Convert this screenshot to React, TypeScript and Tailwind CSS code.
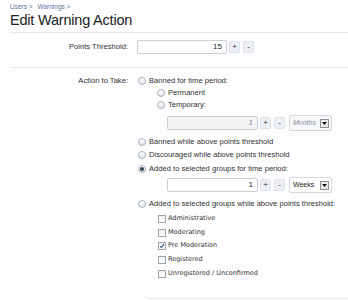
import React from "react";

function Radio({ checked }: { checked?: boolean }) {
    return (
        <span className="w-[8px] h-[8px] rounded-full border border-[#a9b1bd] bg-gradient-to-b from-[#ffffff] to-[#dfe3e9] flex items-center justify-center shrink-0">
            {checked && <span className="w-[4px] h-[4px] rounded-full bg-[#2f3f58]" />}
        </span>
    );
}

function Check({ checked }: { checked?: boolean }) {
    return (
        <span className="w-[8px] h-[8px] border border-[#9ea4ad] bg-gradient-to-b from-[#f0f1f3] to-[#ffffff] flex items-center justify-center shrink-0">
            {checked && (
                <svg width="6" height="6" viewBox="0 0 6 6">
                    <path d="M1 3.2 L2.4 4.6 L5 1.2" stroke="#3d5a8a" strokeWidth="1.1" fill="none" />
                </svg>
            )}
        </span>
    );
}

function SpinBox({
    value,
    width,
    disabled,
}: {
    value: string;
    width: string;
    disabled?: boolean;
}) {
    return (
        <div className="flex items-center">
            <div
                className={
                    "h-[14px] border border-[#c9ced6] rounded-[2px] flex items-center justify-end pr-[4px] text-[8px] " +
                    width +
                    (disabled
                        ? " bg-[#f4f5f7] text-[#8a8f96] italic"
                        : " bg-white text-[#222]")
                }
            >
                {value}
            </div>
            <span className="ml-[2px] w-[11px] h-[12px] rounded-[2px] border border-[#dde2ea] bg-[#eceff4] text-[8px] text-[#333] flex items-center justify-center">
                +
            </span>
            <span className="ml-[3px] w-[11px] h-[12px] rounded-[2px] border border-[#dde2ea] bg-[#eceff4] text-[8px] text-[#333] flex items-center justify-center">
                -
            </span>
        </div>
    );
}

function Select({ label, disabled }: { label: string; disabled?: boolean }) {
    return (
        <div
            className={
                "w-[43px] h-[16px] border border-[#d4d8de] rounded-[2px] flex items-center justify-between pl-[3px] pr-[2px] text-[7px] " +
                (disabled ? "bg-[#f7f8f9] text-[#8a8f96] italic" : "bg-white text-[#222]")
            }
        >
            <span>{label}</span>
            <span className="w-[9px] h-[9px] border border-[#8c8f94] bg-[#eeeeee] flex items-center justify-center">
                <svg width="5" height="3" viewBox="0 0 5 3">
                    <path d="M0 0 L5 0 L2.5 3 Z" fill="#111" />
                </svg>
            </span>
        </div>
    );
}

export default function App() {
    const groups = [
        { name: "Administrative", checked: false, h: "h-[14px] mt-[1px]" },
        { name: "Moderating", checked: false, h: "h-[13px]" },
        { name: "Pre Moderation", checked: true, h: "h-[14px]" },
        { name: "Registered", checked: false, h: "h-[14px]" },
        { name: "Unregistered / Unconfirmed", checked: false, h: "h-[13px]" },
    ];

    return (
        <div className="w-[348px] h-[300px] overflow-hidden bg-[#fdfdfe] text-[#333] font-['Liberation_Sans',Arial,sans-serif]">
            {/* breadcrumb + title */}
            <div className="pl-[10px] pt-[2px] h-[11px] text-[6.5px] text-[#5a7aa6] flex gap-[5px]">
                <span>Users &gt;</span>
                <span>Warnings &gt;</span>
            </div>
            <h1 className="pl-[10px] h-[21px] text-[14.5px] leading-[18px] text-[#222] tracking-[-0.2px]">
                Edit Warning Action
            </h1>
            <div className="ml-[10px] border-b border-[#e3e8ef]" />

            {/* points threshold */}
            <div className="flex items-center mt-[7px] h-[14px]">
                <div className="w-[128px] text-right text-[7.6px] text-[#333]">Points Threshold:</div>
                <div className="ml-[9px]">
                    <SpinBox value="15" width="w-[90px]" />
                </div>
            </div>
            <div className="ml-[10px] mt-[13px] border-b border-[#e3e8ef]" />

            {/* action to take */}
            <div className="flex mt-[6px]">
                <div className="w-[128px] h-[13px] flex items-center justify-end text-[7.6px]">Action to Take:</div>
                <div className="ml-[10px] flex flex-col text-[7.6px]">
                    <div className="h-[13px] flex items-center gap-[3px]">
                        <Radio />
                        <span>Banned for time period:</span>
                    </div>
                    <div className="h-[12px] flex items-center gap-[3px] pl-[19px]">
                        <Radio />
                        <span>Permanent</span>
                    </div>
                    <div className="h-[12px] flex items-center gap-[3px] pl-[19px]">
                        <Radio />
                        <span>Temporary:</span>
                    </div>
                    <div className="flex items-center mt-[4px] pl-[29px] gap-[4px]">
                        <SpinBox value="1" width="w-[91px]" disabled />
                        <Select label="Months" disabled />
                    </div>
                    <div className="h-[13px] mt-[4px] flex items-center gap-[3px]">
                        <Radio />
                        <span>Banned while above points threshold</span>
                    </div>
                    <div className="h-[14px] flex items-center gap-[3px]">
                        <Radio />
                        <span>Discouraged while above points threshold</span>
                    </div>
                    <div className="h-[14px] flex items-center gap-[3px]">
                        <Radio checked />
                        <span>Added to selected groups for time period:</span>
                    </div>
                    <div className="flex items-center mt-[1px] pl-[29px] gap-[4px]">
                        <SpinBox value="1" width="w-[91px]" />
                        <Select label="Weeks" />
                    </div>
                    <div className="h-[14px] mt-[4px] flex items-center gap-[3px]">
                        <Radio />
                        <span>Added to selected groups while above points threshold:</span>
                    </div>
                    <div className="pl-[20px] font-['DejaVu_Sans',Verdana,sans-serif] text-[6.5px] text-[#333]">
                        {groups.map((g) => (
                            <div key={g.name} className={g.h + " flex items-center gap-[2px]"}>
                                <Check checked={g.checked} />
                                <span>{g.name}</span>
                            </div>
                        ))}
                    </div>
                </div>
            </div>

            <div className="ml-[147px] mt-[18px] border-b border-[#e8ecf2]" />
        </div>
    );
}
